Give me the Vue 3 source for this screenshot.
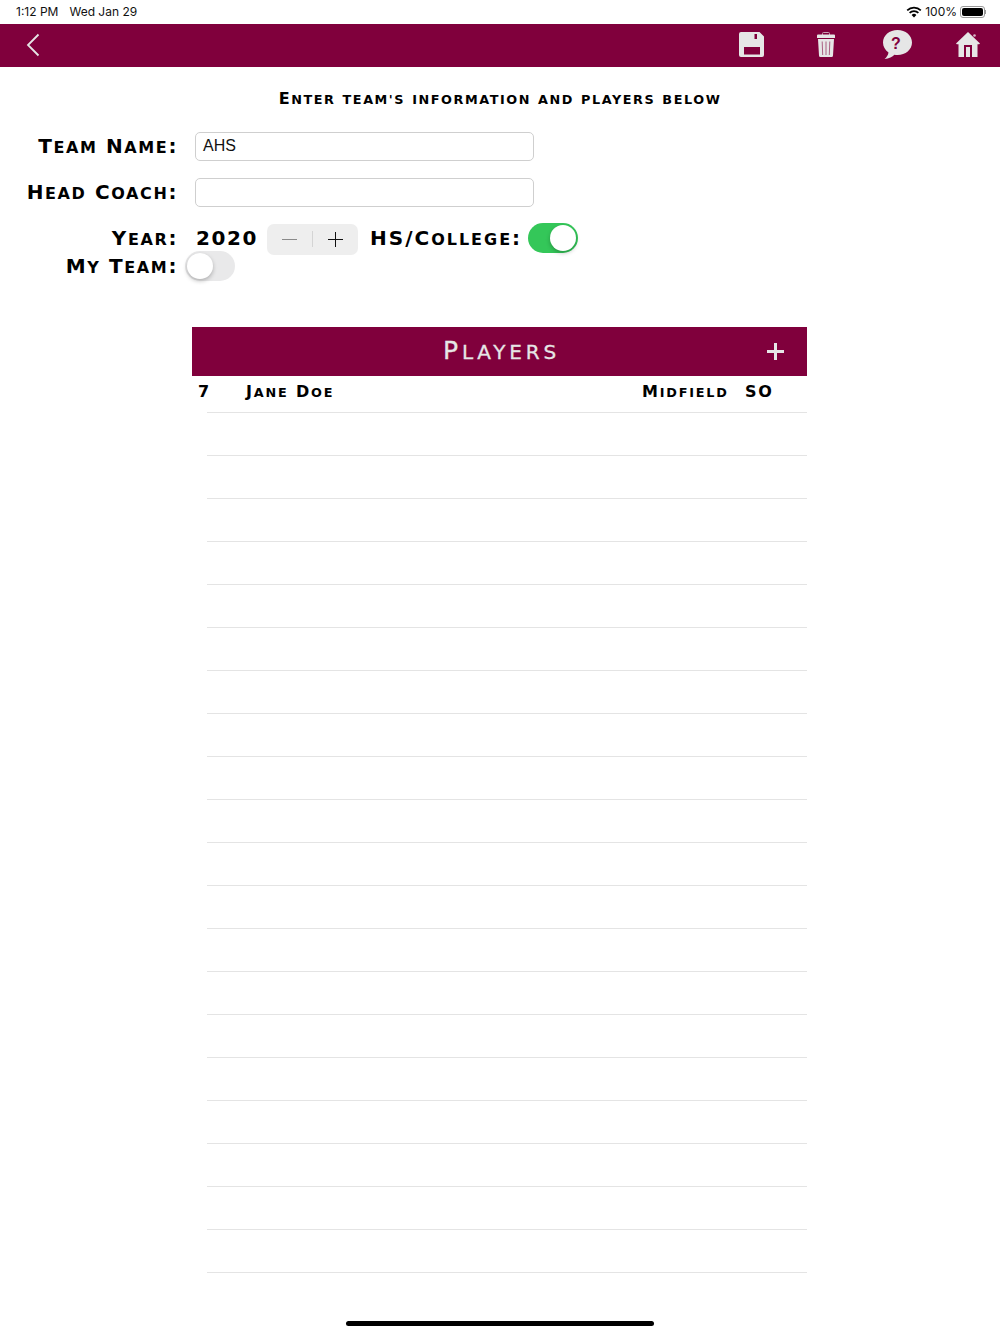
<script setup>
import { h } from "vue";

const rows = Array.from({ length: 20 }, (_, i) => i);

// Copperplate isn't available: big capitals, lowercase drawn as smaller capitals
const Sc = (props) =>
  h(
    "span",
    props.text
      .split(/([a-z']+)/)
      .filter(Boolean)
      .map((part) => h("span", { class: /^[a-z']/.test(part) ? "lo" : "up" }, part))
  );
Sc.props = ["text"];
</script>

<template>
  <div class="page">
    <div class="status">
      <span class="time">1:12 PM</span>
      <span class="date">Wed Jan 29</span>
      <span class="spacer"></span>
      <svg class="wifi" width="16" height="12" viewBox="0 0 16 12">
        <path d="M8 11.500 5.600 8.900a3.400 3.400 0 0 1 4.800 0Z" fill="#000" />
        <path d="M3.600 6.900a6.200 6.200 0 0 1 8.800 0" fill="none" stroke="#000" stroke-width="1.700" />
        <path d="M1.200 4.400a9.600 9.600 0 0 1 13.600 0" fill="none" stroke="#000" stroke-width="1.700" />
      </svg>
      <span class="pct">100%</span>
      <span class="battery"><span class="battery-fill"></span></span>
      <span class="battery-tip"></span>
    </div>

    <div class="nav">
      <svg class="back" width="14" height="24" viewBox="0 0 14 24">
        <path d="M12.500 1.500 2 12l10.500 10.500" fill="none" stroke="#e6e6e6" stroke-width="1.800" />
      </svg>
      <span class="spacer"></span>
      <svg class="nav-icon save" width="25" height="25" viewBox="0 0 25 25">
        <path fill="#e6e6e6" fill-rule="evenodd" d="M2 0h18.500L25 4.500V23a2 2 0 0 1-2 2H2a2 2 0 0 1-2-2V2a2 2 0 0 1 2-2Zm13.500 2v5H18V2ZM5 15v7.500h16V15Z" />
      </svg>
      <svg class="nav-icon trash" width="18" height="25" viewBox="0 0 18 25">
        <path fill="none" stroke="#c9a3b4" stroke-width="1" d="M5.500 3V1.500a1 1 0 0 1 1-1h5a1 1 0 0 1 1 1V3" />
        <path fill="#e6e6e6" d="M1 2.500h16a1 1 0 0 1 1 1V6H0V3.500a1 1 0 0 1 1-1ZM1 7h16l-1 16.500a1.500 1.500 0 0 1-1.500 1.500h-11A1.500 1.500 0 0 1 2 23.500Z" />
        <path fill="none" stroke="#80003c" stroke-opacity="0.65" stroke-width="0.900" d="M5.200 9.500l.5 13.500M9 9.500V23M12.800 9.500 12.300 23" />
      </svg>
      <span class="bubble">
        <svg width="29" height="29" viewBox="0 0 29 29">
          <path fill="#e6e6e6" d="M14.500 0C22.500 0 29 5.400 29 12.500S22.500 25 14.500 25c-1.100 0-2.100-.1-3.100-.3C9.500 27 6 28.600 1.500 29c2.200-1.800 3.600-4 4-6.600C2.100 20 0 16.500 0 12.500 0 5.400 6.500 0 14.500 0Z" />
        </svg>
        <span class="bubble-mark">?</span>
      </span>
      <svg class="nav-icon home" width="24" height="25" viewBox="0 0 24 25">
        <circle cx="18.500" cy="3.500" r="1.300" fill="#d9b9c8" />
        <path fill="#e6e6e6" fill-rule="evenodd" d="M12 0 24 11.500l-.8.800H21.500V25H2.500V12.300H.8L0 11.500ZM8 13v12h8V13Z" />
        <path fill="#e6e6e6" d="M10 15h4v10h-4Z" />
      </svg>
    </div>

    <div class="title"><Sc text="Enter team's information and players below" /></div>

    <div class="form">
      <div class="form-row">
        <label class="label"><Sc text="Team Name:" /></label>
        <div class="input">AHS</div>
      </div>
      <div class="form-row">
        <label class="label"><Sc text="Head Coach:" /></label>
        <div class="input"></div>
      </div>
      <div class="form-row compact">
        <label class="label"><Sc text="Year:" /></label>
        <span class="year">2020</span>
        <div class="stepper">
          <span class="step minus"></span>
          <span class="step-sep"></span>
          <span class="step plus"></span>
        </div>
        <label class="label hs"><Sc text="HS/College:" /></label>
        <span class="toggle on"><span class="knob"></span></span>
      </div>
      <div class="form-row compact">
        <label class="label"><Sc text="My Team:" /></label>
        <span class="toggle off"><span class="knob"></span></span>
      </div>
    </div>

    <div class="players">
      <div class="players-head">
        <Sc text="Players" />
        <span class="add"></span>
      </div>
      <div class="player first-row">
        <span class="num">7</span>
        <span class="name"><Sc text="Jane Doe" /></span>
        <span class="pos"><Sc text="Midfield" /></span>
        <span class="yr"><Sc text="SO" /></span>
      </div>
      <div v-for="r in rows" :key="r" class="player"></div>
    </div>

    <div class="home-bar"></div>
  </div>
</template>

<style>
html, body {
  background: #fff;
}

.lo {
  font-size: 0.8em;
  text-transform: uppercase;
}
</style>

<style scoped>
.page {
  width: 1000px;
  height: 1334px;
  position: relative;
  overflow: hidden;
  background: #fff;
  color: #000;
  font-family: "DejaVu Sans", sans-serif;
}

.spacer {
  flex: 1;
}

.status {
  height: 24px;
  box-sizing: border-box;
  display: flex;
  align-items: center;
  padding: 0 14px 1px 16px;
  font-family: Inter, "Liberation Sans", sans-serif;
  font-size: 12px;
  color: #111;
}

.date {
  margin-left: 11px;
}

.pct {
  margin-left: 3px;
}

.battery {
  margin-left: 3px;
  width: 25px;
  height: 12px;
  box-sizing: border-box;
  border: 1px solid #9a9a9a;
  border-radius: 3px;
  padding: 1px;
  display: flex;
}

.battery-fill {
  flex: 1;
  background: #000;
  border-radius: 2px;
}

.battery-tip {
  width: 1px;
  height: 4px;
  background: #9a9a9a;
}

.nav {
  height: 43px;
  box-sizing: border-box;
  background: #80003c;
  display: flex;
  align-items: center;
  padding: 0 20px 2px 26px;
}

.nav-icon {
  display: block;
}

.save {
  margin-right: 53px;
}

.trash {
  margin-right: 48px;
}

.bubble {
  position: relative;
  width: 29px;
  height: 29px;
  margin-right: 44px;
}

.bubble svg {
  display: block;
}

.bubble-mark {
  position: absolute;
  left: 0;
  right: 3px;
  top: 4px;
  text-align: center;
  color: #80003c;
  font-family: "Liberation Sans", sans-serif;
  font-size: 16px;
  font-weight: 700;
  line-height: 20px;
}

.title {
  margin-top: 22px;
  text-align: center;
  font-size: 16px;
  font-weight: 700;
  letter-spacing: 1.550px;
  line-height: 20px;
}

.form {
  margin-top: 22px;
}

.form-row {
  display: flex;
  align-items: center;
  height: 29px;
  margin-bottom: 17px;
}

.form-row.compact {
  height: 28px;
  margin-bottom: 0;
}

.label {
  width: 178px;
  flex: none;
  text-align: right;
  font-size: 20px;
  font-weight: 700;
  letter-spacing: 1.600px;
  white-space: nowrap;
  padding-bottom: 2px;
}

.compact .label {
  padding-bottom: 0;
}

.input {
  margin-left: 17px;
  width: 339px;
  height: 29px;
  box-sizing: border-box;
  border: 1px solid #cfcfcf;
  border-radius: 5px;
  padding-left: 7px;
  font-family: "Liberation Sans", sans-serif;
  font-size: 16px;
  line-height: 26px;
  color: #111;
}

.year {
  margin-left: 18px;
  width: 71px;
  font-size: 20px;
  font-weight: 700;
  letter-spacing: 1.600px;
}

.stepper {
  width: 91px;
  height: 31px;
  flex: none;
  margin-top: 2px;
  background: #eeeeee;
  border-radius: 7px;
  position: relative;
  display: flex;
  align-items: center;
  justify-content: center;
}

.step-sep {
  width: 1px;
  height: 16px;
  background: #d4d4d4;
}

.step {
  position: absolute;
  top: 15px;
  width: 15px;
  height: 1.500px;
}

.minus {
  left: 15px;
  background: #8a8a8a;
}

.plus {
  left: 61px;
  background: #111;
}

.plus::after {
  content: "";
  position: absolute;
  left: 6.750px;
  top: -6.750px;
  width: 1.500px;
  height: 15px;
  background: #111;
}

.label.hs {
  width: auto;
  margin-left: 12px;
  letter-spacing: 2px;
}

.toggle {
  width: 50px;
  height: 30px;
  flex: none;
  border-radius: 15px;
  position: relative;
  box-sizing: border-box;
}

.toggle.on {
  background: #34c759;
  margin-left: 6px;
}

.toggle.off {
  background: #e9e9ea;
  margin-left: 7px;
}

.knob {
  position: absolute;
  top: 2px;
  width: 26px;
  height: 26px;
  border-radius: 50%;
  background: #fff;
  box-shadow: 0 2px 4px rgba(0, 0, 0, 0.25);
}

.toggle.on .knob {
  right: 2px;
}

.toggle.off .knob {
  left: 2px;
}

.players {
  position: absolute;
  left: 192px;
  top: 327px;
  width: 615px;
}

.players-head {
  height: 49px;
  background: #80003c;
  color: #e6e6e6;
  font-size: 25px;
  letter-spacing: 3.800px;
  -webkit-text-stroke: 0.300px #e6e6e6;
  padding: 0 0 2px 4px;
  box-sizing: border-box;
  display: flex;
  align-items: center;
  justify-content: center;
  position: relative;
}

.add {
  position: absolute;
  left: 575px;
  top: 23px;
  width: 17px;
  height: 2.500px;
  background: #e6e6e6;
}

.add::after {
  content: "";
  position: absolute;
  left: 7.250px;
  top: -7.250px;
  width: 2.500px;
  height: 17px;
  background: #e6e6e6;
}

.player {
  height: 43px;
  box-sizing: border-box;
  margin-left: 15px;
  border-bottom: 1px solid #e4e4e4;
}

.player.first-row {
  height: 37px;
  margin-left: 0;
  position: relative;
  display: flex;
  align-items: center;
  font-size: 16px;
  font-weight: 700;
  letter-spacing: 1.800px;
  padding-bottom: 6px;
  border-bottom: none;
}

.player.first-row::after {
  content: "";
  position: absolute;
  left: 15px;
  right: 0;
  bottom: 0;
  height: 1px;
  background: #e4e4e4;
}

.num {
  margin-left: 6px;
  width: 48px;
}

.name {
  width: 396px;
}

.pos {
  width: 103px;
}

.home-bar {
  position: absolute;
  left: 346px;
  top: 1321px;
  width: 308px;
  height: 5px;
  border-radius: 3px;
  background: #000;
}
</style>
